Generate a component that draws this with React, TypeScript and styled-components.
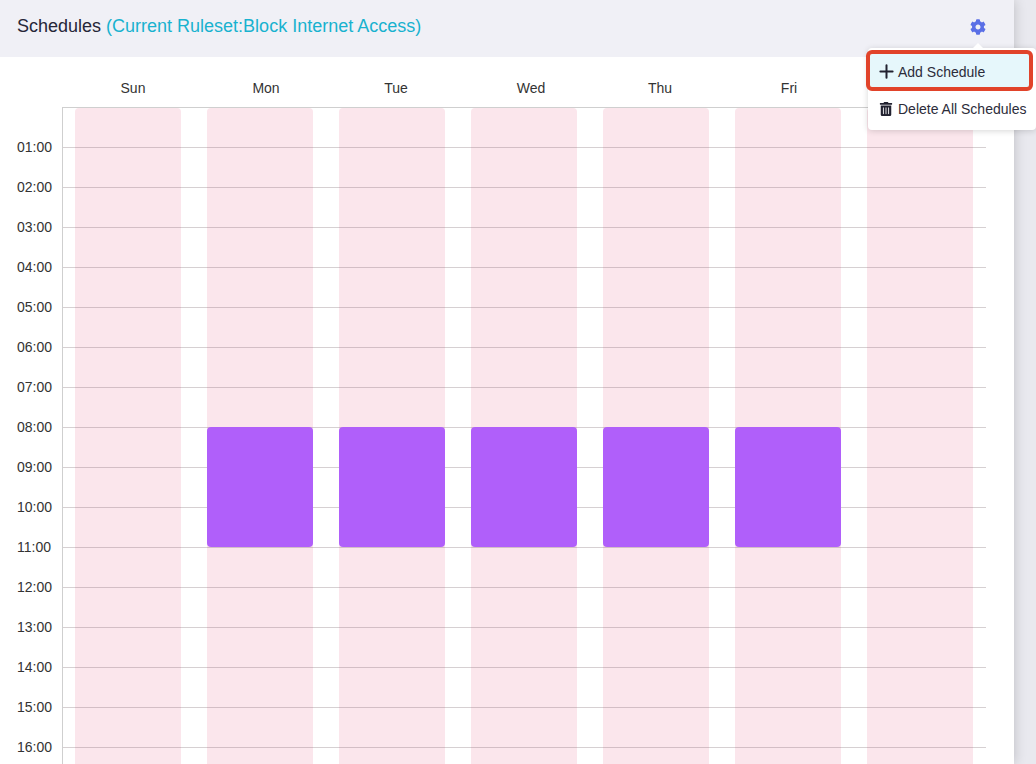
import React from 'react';
import styled, { createGlobalStyle } from 'styled-components';
import { Plus } from 'lucide-react';
import { FaCog, FaTrashAlt } from 'react-icons/fa';

const GlobalStyle = createGlobalStyle`
  html, body {
    margin: 0;
    height: 100%;
    overflow: hidden;
    background: #e9e9ef;
    font-family: "Liberation Sans", Arial, sans-serif;
    color: #2c2c3a;
  }
`;

const Page = styled.div`
  position: relative;
  width: 1036px;
  height: 764px;
  overflow: hidden;
`;

const Panel = styled.div`
  width: 1014px;
  height: 764px;
  background: #fff;
  box-shadow: 0 0 12px rgba(0, 0, 0, 0.2);
`;

const Header = styled.div`
  display: flex;
  align-items: center;
  justify-content: space-between;
  height: 57px;
  padding: 0 28px 4px 17px;
  box-sizing: border-box;
  background: #f0f0f6;
  font-size: 18px;
`;

const Title = styled.div`
  color: #262638;
`;

const Ruleset = styled.span`
  color: #18b2cf;
`;

const GearButton = styled.div`
  display: flex;
  color: #5a6fe6;
  font-size: 16px;
`;

const DayHeader = styled.div`
  display: grid;
  grid-template-columns: 134px 132px 128px 142px 116px 142px 130px;
  height: 50px;
  margin-left: 66px;
  font-size: 14px;
  line-height: 62px;
  text-align: center;
  color: #333;
`;

const Body = styled.div`
  display: flex;
`;

const Gutter = styled.div`
  width: 62px;
  padding: 20px 0 0 17px;
  box-sizing: border-box;
  font-size: 14px;
  color: #333;
`;

const HourLabel = styled.div`
  height: 40px;
  line-height: 40px;
`;

const Grid = styled.div`
  position: relative;
  width: 924px;
  height: 680px;
  border-top: 1px solid #cfcfcf;
  border-left: 1px solid #cfcfcf;
  box-sizing: border-box;
`;

const GridLine = styled.div`
  position: relative;
  height: 40px;
  box-sizing: border-box;
  border-bottom: 1px solid rgba(120, 100, 105, 0.3);
`;

const ColumnLayer = styled.div`
  position: absolute;
  top: 0;
  left: -1px;
  display: grid;
  grid-template-columns: repeat(7, 132px);
  height: 100%;
`;

const Column = styled.div`
  padding: 0 13px;
`;

const AllowedBar = styled.div`
  height: 100%;
  border-radius: 4px 4px 0 0;
  background: #fbe6ec;
`;

const Block = styled.div<{ start: number; hours: number }>`
  height: ${({ hours }) => hours * 40}px;
  margin-top: ${({ start }) => start * 40 - 1}px;
  border-radius: 4px;
  background: #b05ffa;
`;

const Menu = styled.div`
  position: absolute;
  top: 48px;
  left: 868px;
  width: 168px;
  height: 82px;
  padding-top: 6px;
  box-sizing: border-box;
  border-radius: 4px;
  background: #fff;
  box-shadow: 0 1px 6px rgba(0, 0, 0, 0.16);
  font-size: 14px;
  color: #2c2c3a;

  &::before {
    content: '';
    position: absolute;
    top: -5px;
    left: 105px;
    border-left: 5px solid transparent;
    border-right: 5px solid transparent;
    border-bottom: 5px solid #fff;
  }
`;

const MenuItem = styled.div<{ active?: boolean }>`
  display: flex;
  align-items: center;
  gap: 6px;
  height: ${({ active }) => (active ? 33 : 36)}px;
  width: 159px;
  margin: ${({ active }) => (active ? '0 0 4px 2px' : '0 0 0 2px')};
  padding: ${({ active }) => (active ? '2px 0 0 10px' : '0 0 0 10px')};
  box-sizing: border-box;
  white-space: nowrap;
  background: ${({ active }) => (active ? '#e6f7fb' : 'transparent')};
  outline: ${({ active }) => (active ? '4px solid #e1432a' : 'none')};
  border-radius: 2px;
`;

const IconSlot = styled.span`
  display: flex;
  flex: 0 0 12px;
  width: 12px;
  min-width: 0;
  justify-content: center;
  color: #222230;

  svg {
    flex-shrink: 0;
  }
`;

const days = ['Sun', 'Mon', 'Tue', 'Wed', 'Thu', 'Fri', 'Sat'];
const hours = Array.from({ length: 16 }, (_, i) => `${String(i + 1).padStart(2, '0')}:00`);

const App: React.FC = () => {
  return (
    <Page>
      <GlobalStyle />
      <Panel>
        <Header>
          <Title>
            Schedules <Ruleset>(Current Ruleset:Block Internet Access)</Ruleset>
          </Title>
          <GearButton>
            <FaCog />
          </GearButton>
        </Header>
        <DayHeader>
          {days.map((day) => (
            <div key={day}>{day}</div>
          ))}
        </DayHeader>
        <Body>
          <Gutter>
            {hours.map((hour) => (
              <HourLabel key={hour}>{hour}</HourLabel>
            ))}
          </Gutter>
          <Grid>
            <ColumnLayer>
              {days.map((day) => (
                <Column key={day}>
                  <AllowedBar />
                </Column>
              ))}
            </ColumnLayer>
            {hours.map((hour) => (
              <GridLine key={hour} />
            ))}
            <ColumnLayer>
              {days.map((day, i) => (
                <Column key={day}>
                  {i > 0 && i < 6 && <Block start={8} hours={3} />}
                </Column>
              ))}
            </ColumnLayer>
          </Grid>
        </Body>
      </Panel>
      <Menu>
        <MenuItem active>
          <IconSlot>
            <Plus size={21} strokeWidth={2.3} />
          </IconSlot>
          Add Schedule
        </MenuItem>
        <MenuItem>
          <IconSlot>
            <FaTrashAlt size={14} />
          </IconSlot>
          Delete All Schedules
        </MenuItem>
      </Menu>
    </Page>
  );
};

export default App;
